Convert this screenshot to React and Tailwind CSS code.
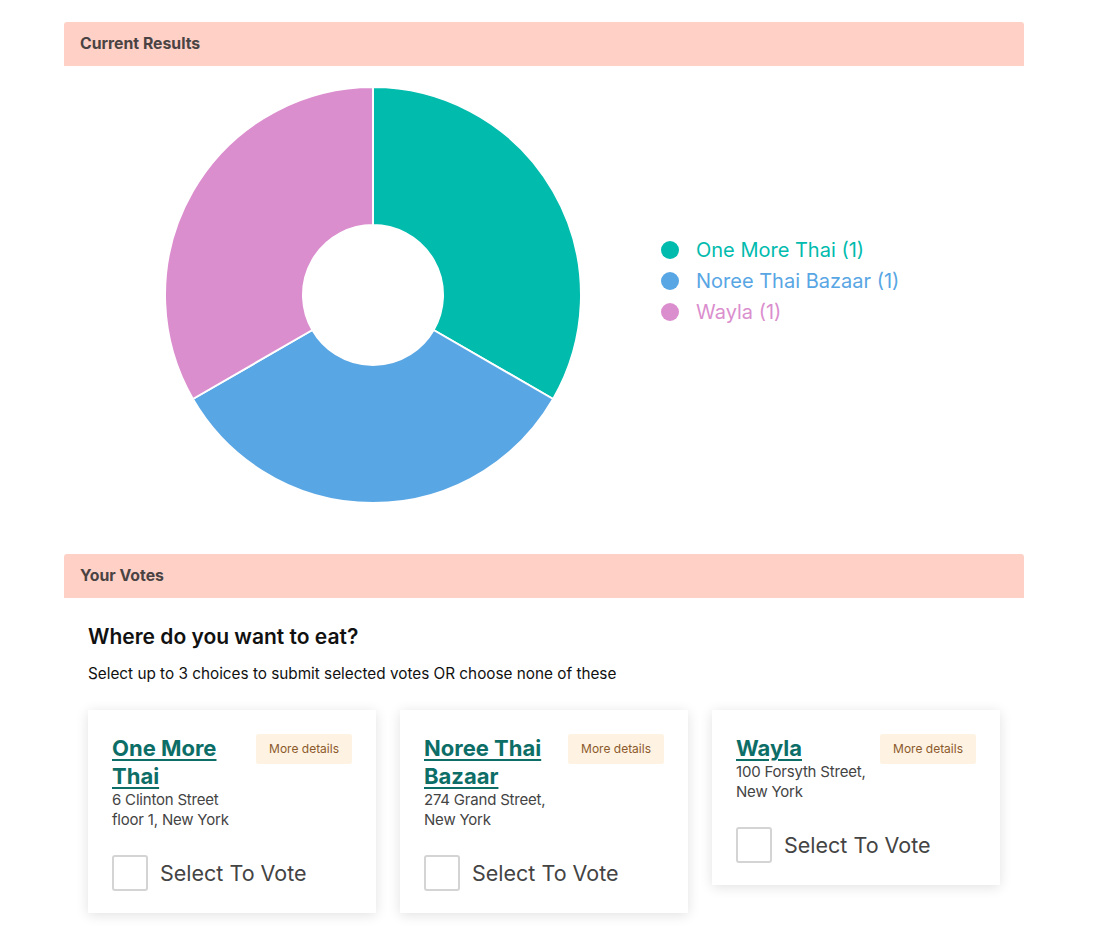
import React from "react";

const slices = [
  { name: "One More Thai", count: 1, color: "#01bbad", d: "M210 2 A208 208 0 0 1 390.13 314 L270.62 245 A70 70 0 0 0 210 140 Z" },
  { name: "Noree Thai Bazaar", count: 1, color: "#59a6e4", d: "M390.13 314 A208 208 0 0 1 29.87 314 L149.38 245 A70 70 0 0 0 270.62 245 Z" },
  { name: "Wayla", count: 1, color: "#db8ece", d: "M29.87 314 A208 208 0 0 1 210 2 L210 140 A70 70 0 0 0 149.38 245 Z" },
];

const places = [
  { name: "One More Thai", address: ["6 Clinton Street", "floor 1, New York"] },
  { name: "Noree Thai Bazaar", address: ["274 Grand Street,", "New York"] },
  { name: "Wayla", address: ["100 Forsyth Street,", "New York"] },
];

function SectionHeader({ children }) {
  return (
    <div className="h-[44px] flex items-center px-4 bg-[#ffd0c6] rounded-t-[3px] text-[15.8px] font-bold text-[#4a4343]">
      {children}
    </div>
  );
}

function PlaceCard({ place }) {
  return (
    <div className="w-[288px] bg-white px-6 pt-6 pb-[22px] shadow-[0_2px_12px_rgba(0,0,0,0.12)]">
      <div className="flex items-start">
        <div className="flex-1 min-w-0">
          <a href="#" className="block text-[22px] leading-[28px] font-bold text-[#0d6e67] underline underline-offset-[3px] decoration-2">
            {place.name}
          </a>
          <div className="text-[15px] leading-[20px] tracking-[-0.2px] text-[#444]">
            {place.address.map((line) => (
              <div key={line} className="whitespace-nowrap">{line}</div>
            ))}
          </div>
        </div>
        <div className="shrink-0 ml-1 h-[30px] px-[13px] flex items-center bg-[#fef2e3] rounded-[2px] text-[12px] text-[#8b5a2b]">
          More details
        </div>
      </div>
      <label className="mt-[25px] flex items-center gap-3">
        <span className="w-[36px] h-[36px] border-2 border-[#d4d4d4] rounded-[3px] bg-white" />
        <span className="text-[21.5px] text-[#444]">Select To Vote</span>
      </label>
    </div>
  );
}

export default function App() {
  return (
    <div className="min-h-screen bg-white font-['Inter','Liberation_Sans',sans-serif]">
      <div className="w-[960px] ml-16 pt-[22px]">
        <SectionHeader>Current Results</SectionHeader>

        {/* Chart */}
        <div className="flex items-start h-[488px]">
          <svg width="420" height="420" viewBox="0 0 420 420" className="ml-[99px] mt-[19px]">
            {slices.map((s) => (
              <path key={s.name} d={s.d} fill={s.color} stroke="#fff" strokeWidth="2" />
            ))}
          </svg>
          <div className="ml-[78px] mt-[168px] flex flex-col">
            {slices.map((s) => (
              <div key={s.name} className="flex items-center h-[31px]">
                <span className="w-[18px] h-[18px] rounded-full" style={{ backgroundColor: s.color }} />
                <span className="ml-[17px] text-[20px]" style={{ color: s.color }}>
                  {s.name} ({s.count})
                </span>
              </div>
            ))}
          </div>
        </div>

        <SectionHeader>Your Votes</SectionHeader>

        <div className="px-6 pt-[25px] pb-6">
          <h2 className="text-[21px] leading-[28px] font-semibold text-[#111]">Where do you want to eat?</h2>
          <p className="mt-[13px] text-[15.3px] leading-[20px] text-[#111]">
            Select up to 3 choices to submit selected votes OR choose none of these
          </p>
          <div className="mt-[26px] flex items-start gap-6">
            {places.map((p) => (
              <PlaceCard key={p.name} place={p} />
            ))}
          </div>
        </div>
      </div>
    </div>
  );
}
